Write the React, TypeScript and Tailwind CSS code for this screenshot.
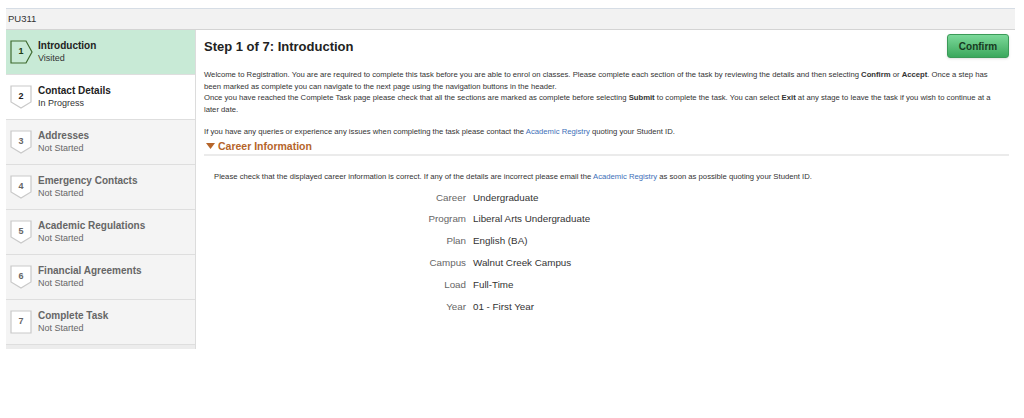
import React from 'react';

type Step = { n: number; title: string; status: string };

const steps: Step[] = [
  { n: 1, title: 'Introduction', status: 'Visited' },
  { n: 2, title: 'Contact Details', status: 'In Progress' },
  { n: 3, title: 'Addresses', status: 'Not Started' },
  { n: 4, title: 'Emergency Contacts', status: 'Not Started' },
  { n: 5, title: 'Academic Regulations', status: 'Not Started' },
  { n: 6, title: 'Financial Agreements', status: 'Not Started' },
  { n: 7, title: 'Complete Task', status: 'Not Started' },
];

const fields = [
  ['Career', 'Undergraduate'],
  ['Program', 'Liberal Arts Undergraduate'],
  ['Plan', 'English (BA)'],
  ['Campus', 'Walnut Creek Campus'],
  ['Load', 'Full-Time'],
  ['Year', '01 - First Year'],
];

const Badge = ({ n }: { n: number }) => {
  // first step is an arrow pointing right, last is a plain box, the rest point down
  let shape = 'M1 1 H21 V17 L11 23 L1 17 Z';
  let stroke = '#c9c9c9';
  let fill = '#ffffff';
  if (n === 1) {
    shape = 'M1 1 H16 L22 12 L16 23 H1 Z';
    stroke = '#3f6b2f';
    fill = '#c8ead6';
  } else if (n === 7) {
    shape = 'M1 1 H21 V23 H1 Z';
  }
  return (
    <div className="relative h-6 w-6 shrink-0">
      <svg width="24" height="24" viewBox="0 0 24 24" className="absolute inset-0">
        <path d={shape} fill={fill} stroke={stroke} strokeWidth="1.2" />
      </svg>
      <span
        className={`absolute left-0 top-[5px] w-[22px] text-center text-[9px] font-bold ${
          n === 1 ? 'text-[#1f3b14]' : n === 2 ? 'text-[#222]' : 'text-[#666]'
        }`}
      >
        {n}
      </span>
    </div>
  );
};

export default function App() {
  return (
    <div className="min-h-[418px] bg-white pt-2 text-[#333]" style={{ fontFamily: '"Liberation Sans", Arial, sans-serif' }}>
      <div className="mx-[6px] w-[1009px]">
        <div className="flex h-[22px] items-center border-t border-b border-t-[#d6dde5] border-b-[#d4d4d4] bg-[#f2f2f2] px-[2px] text-[9.5px] text-[#333]">
          PU311
        </div>
        <div className="flex">
          <div className="w-[190px] shrink-0 border-r border-[#dcdcdc] bg-[#f4f4f4]">
            {steps.map((s) => (
              <div
                key={s.n}
                className={`flex h-[45px] items-start gap-[4px] border-b border-[#dedede] pl-[4px] pt-[10px] ${
                  s.n === 1 ? 'bg-[#c8ead6]' : s.n === 2 ? 'bg-white' : 'bg-[#f4f4f4]'
                }`}
              >
                <Badge n={s.n} />
                <div className="leading-[12px]">
                  <div className={`text-[10px] font-bold ${s.n <= 2 ? 'text-[#222]' : 'text-[#666]'}`}>{s.title}</div>
                  <div className={`text-[9px] ${s.n <= 2 ? 'text-[#333]' : 'text-[#666]'}`}>{s.status}</div>
                </div>
              </div>
            ))}
            <div className="h-[4px] bg-[#ececec]" />
          </div>

          <div className="flex-1 pl-[8px] pr-[6px] pt-[4px]">
            <div className="flex items-start justify-between">
              <h1 className="mt-[5px] text-[13px] font-bold leading-[16px] text-[#222]">Step 1 of 7: Introduction</h1>
              <button className="h-[24px] w-[62px] rounded-[3px] border border-[#3b9a58] bg-gradient-to-b from-[#7bd99a] to-[#3aa85d] text-[10px] font-bold text-[#173a22] shadow-sm">
                Confirm
              </button>
            </div>
            <div className="mt-[11px] pr-[12px] text-[7.7px] leading-[11.7px] text-[#333]">
              <p>
                Welcome to Registration. You are are required to complete this task before you are able to enrol on classes. Please complete each section of the task by reviewing the details and then selecting <b>Confirm</b> or <b>Accept</b>. Once a step has been marked as complete you can navigate to the next page using the navigation buttons in the header.
              </p>
              <p>
                Once you have reached the Complete Task page please check that all the sections are marked as complete before selecting <b>Submit</b> to complete the task. You can select <b>Exit</b> at any stage to leave the task if you wish to continue at a later date.
              </p>
              <p className="mt-[10px]">
                If you have any queries or experience any issues when completing the task please contact the{' '}
                <span className="text-[#3d6fb8]">Academic Registry</span> quoting your Student ID.
              </p>
            </div>
            <div className="mt-[1px] flex items-center gap-[3px] border-b-2 border-[#ebebeb] pb-[1px] pl-[2px] text-[10.5px] font-bold leading-[14px] text-[#b5652a]">
              <svg width="9" height="6" viewBox="0 0 9 6">
                <path d="M0 0 H9 L4.5 6 Z" fill="#b5652a" />
              </svg>
              Career Information
            </div>
            <p className="mt-[16px] pl-[10px] text-[7.7px] leading-[10px] text-[#333]">
              Please check that the displayed career information is correct. If any of the details are incorrect please email the{' '}
              <span className="text-[#3d6fb8]">Academic Registry</span> as soon as possible quoting your Student ID.
            </p>
            <div className="mt-[9px] grid grid-cols-[262px_1fr] gap-x-[7px] gap-y-[7.8px] text-[9.8px] leading-[14px]">
              {fields.map(([k, v]) => (
                <React.Fragment key={k}>
                  <div className="text-right text-[#666]">{k}</div>
                  <div className="text-[#333]">{v}</div>
                </React.Fragment>
              ))}
            </div>
          </div>
        </div>
      </div>
    </div>
  );
}
